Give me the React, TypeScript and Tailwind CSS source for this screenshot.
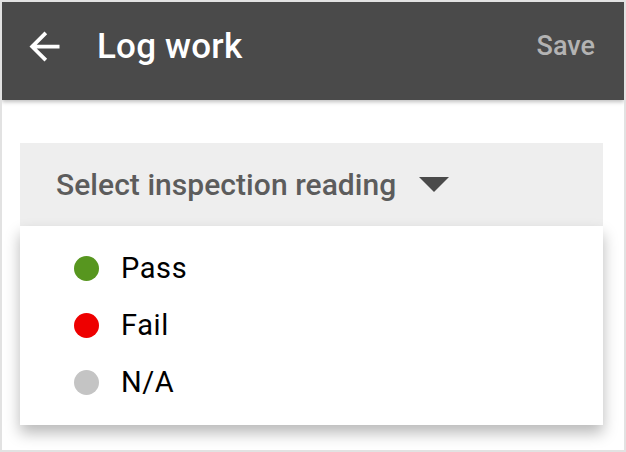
import React from "react";

const items = [
  { label: "Pass", color: "bg-[#57961f]" },
  { label: "Fail", color: "bg-[#ee0000]" },
  { label: "N/A", color: "bg-[#c4c4c4]" },
];

export default function App() {
  return (
    <div
      className="w-[626px] h-[452px] border-2 border-[#e2e2e2] bg-white overflow-hidden flex flex-col"
      style={{ fontFamily: "Roboto, 'Noto Sans', sans-serif" }}
    >
      <div className="h-[98px] shrink-0 bg-[#4a4a4a] flex items-center pb-[10px] shadow-[0_2px_4px_rgba(0,0,0,0.25)] relative z-10">
        <svg
          viewBox="0 0 24 24"
          className="w-[45px] h-[45px] ml-[20px] fill-white"
        >
          <path d="M20 11H7.83l5.59-5.59L12 4l-8 8 8 8 1.41-1.41L7.83 13H20v-2z" />
        </svg>
        <div className="ml-[30px] text-white text-[35px] font-medium leading-none tracking-[0.2px]">
          Log work
        </div>
        <div className="ml-auto mr-[29px] text-[#b3b3b3] text-[27px] font-medium leading-none">
          Save
        </div>
      </div>
      <div className="pt-[43px] pl-[18px]">
        <div className="w-[583px] h-[83px] bg-[#eeeeee] flex items-center pl-[36px]">
          <span className="text-[30px] font-medium text-[#5c5c5c] leading-none tracking-[0.05px]">
            Select inspection reading
          </span>
          <svg viewBox="0 0 30 15" className="w-[30px] h-[15px] ml-[23px] fill-[#4a4a4a]">
            <path d="M0 0h30L15 15z" />
          </svg>
        </div>
        <div className="w-[583px] bg-white shadow-[0_8px_14px_rgba(0,0,0,0.28)] py-[14px]">
          {items.map((it) => (
            <div key={it.label} className="h-[57px] flex items-center pl-[54px]">
              <span className={`w-[25px] h-[25px] rounded-full ${it.color}`} />
              <span className="ml-[22px] text-[29px] text-black leading-none tracking-[0.6px]">
                {it.label}
              </span>
            </div>
          ))}
        </div>
      </div>
    </div>
  );
}
